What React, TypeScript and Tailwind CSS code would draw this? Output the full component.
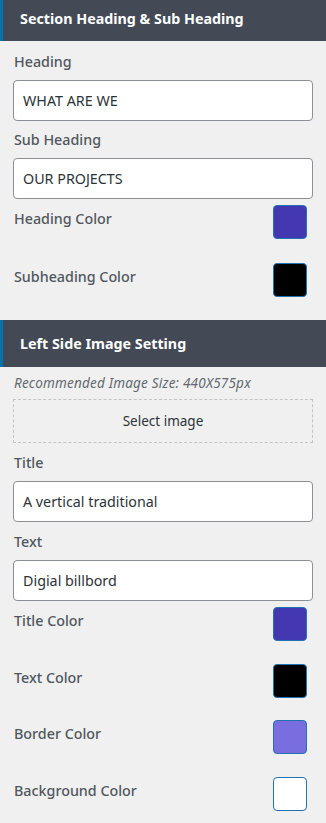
const font = { fontFamily: '"Noto Sans", "Open Sans", sans-serif' };

const SectionHeader = ({ title, className }: { title: string; className?: string }) => (
  <div className={`flex items-center bg-[#434a56] border-l-[3px] border-[#0073aa] pl-[17px] ${className ?? ''}`}>
    <span className="text-white text-[14.3px] font-bold leading-5">{title}</span>
  </div>
);

const TextField = ({ label, value }: { label: string; value: string }) => (
  <div className="flex flex-col">
    <label className="text-[14.3px] leading-5 font-medium text-[#50575e] mb-2 pl-px">{label}</label>
    <div className="h-[41px] flex items-center bg-white border border-[#8c8f94] rounded-[4px] px-[9px] text-[14.3px] text-[#2c3338]">
      {value}
    </div>
  </div>
);

const ColorRow = ({ label, color }: { label: string; color: string }) => (
  <div className="flex items-start justify-between pr-[6px] h-[34px]">
    <span className="text-[14.3px] leading-5 font-medium text-[#50575e] mt-[4px] pl-px">{label}</span>
    <div className="w-[34px] h-[34px] rounded-[4px] border border-[#2271b1]" style={{ backgroundColor: color }} />
  </div>
);

export default function App() {
  return (
    <div className="w-[326px] h-[823px] bg-[#f0f0f0] overflow-hidden" style={font}>
      <SectionHeader title="Section Heading & Sub Heading" className="h-[41px] pb-[3px]" />
      <div className="px-[13px] pt-[11px] flex flex-col">
        <TextField label="Heading" value="WHAT ARE WE" />
        <div className="h-[9px]" />
        <TextField label="Sub Heading" value="OUR PROJECTS" />
        <div className="flex flex-col gap-[24px] mt-[6px]">
          <ColorRow label="Heading Color" color="#4338b0" />
          <ColorRow label="Subheading Color" color="#000000" />
        </div>
      </div>
      <SectionHeader title="Left Side Image Setting" className="h-[47px] mt-[23px]" />
      <div className="px-[13px] pt-[8px] flex flex-col">
        <p className="text-[13.5px] leading-4 italic tracking-[0.2px] text-[#646970] pl-px">Recommended Image Size: 440X575px</p>
        <div className="mt-[8px] h-[44px] flex items-center justify-center border border-dashed border-[#c3c4c7] text-[13.5px] text-[#2c3338]">
          Select image
        </div>
        <div className="h-[10px]" />
        <TextField label="Title" value="A vertical traditional" />
        <div className="h-[10px]" />
        <TextField label="Text" value="Digial billbord" />
        <div className="flex flex-col gap-[22.5px] mt-[6px]">
          <ColorRow label="Title Color" color="#4338b0" />
          <ColorRow label="Text Color" color="#000000" />
          <ColorRow label="Border Color" color="#786ee0" />
          <ColorRow label="Background Color" color="#ffffff" />
        </div>
      </div>
    </div>
  );
}
